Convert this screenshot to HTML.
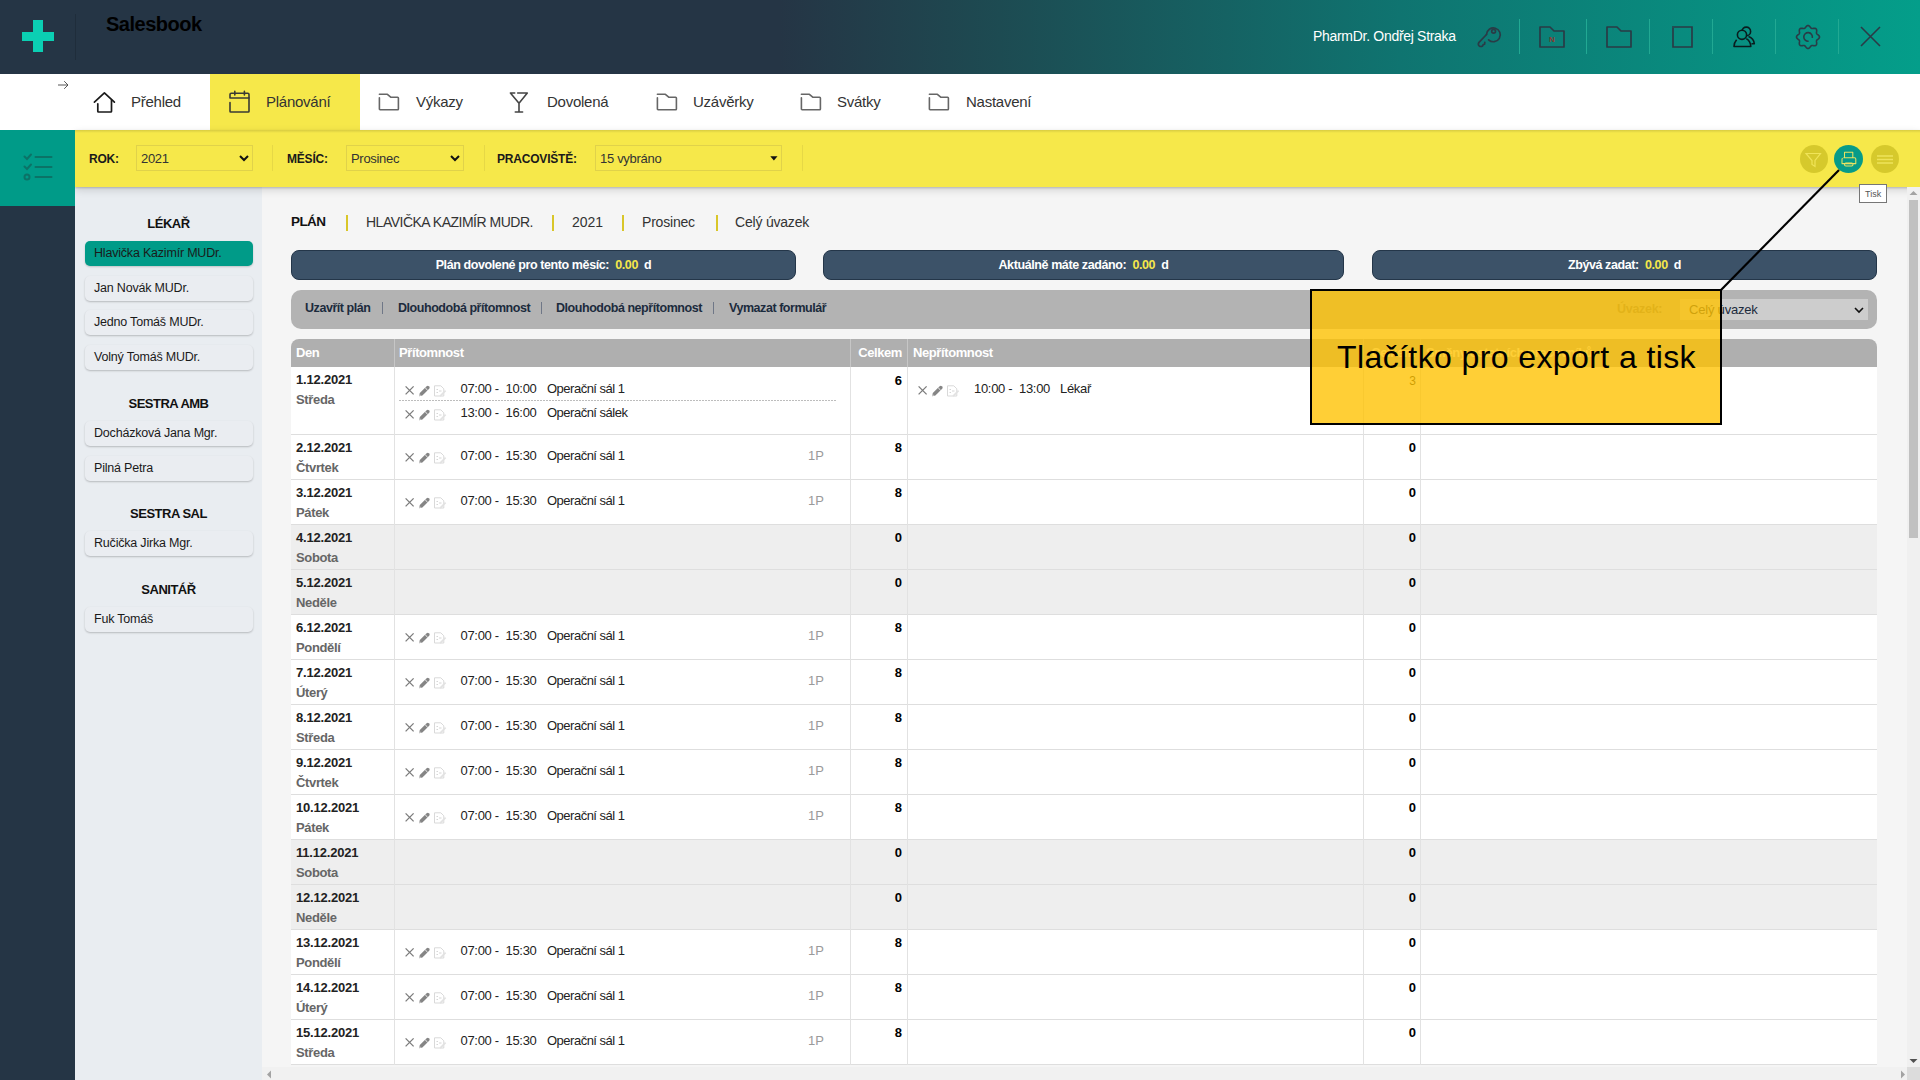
<!DOCTYPE html>
<html><head><meta charset="utf-8"><style>
*{margin:0;padding:0;box-sizing:border-box}
html,body{width:1920px;height:1080px;overflow:hidden;background:#f5f5f5;font-family:"Liberation Sans",sans-serif;color:#222}
.a{position:absolute}
.t{position:absolute;white-space:nowrap;line-height:0;height:0}
svg{position:absolute;overflow:visible}
</style></head><body>
<div class="a" style="left:0;top:0;width:1920px;height:74px;background:linear-gradient(90deg,#253545 0px,#253545 780px,#1d4b52 1000px,#0f7470 1400px,#049e8a 1920px)"></div>
<div class="a" style="left:33px;top:20px;width:10px;height:32px;background:#0bcfb3"></div>
<div class="a" style="left:22px;top:32px;width:32px;height:9px;background:#0bcfb3"></div>
<div class="a" style="left:75px;top:14px;width:1px;height:46px;background:#1f2d3b"></div>
<div class="t" style="left:106px;top:24.07px;font-size:20px;font-weight:bold;color:#000;letter-spacing:-0.5px;">Salesbook</div>
<div class="t" style="left:1313px;top:36.15px;font-size:14px;font-weight:normal;color:#fff;letter-spacing:-0.3px;">PharmDr. Ondřej Straka</div>
<div class="a" style="left:1519px;top:19px;width:1px;height:35px;background:#22a993"></div>
<div class="a" style="left:1586px;top:19px;width:1px;height:35px;background:#22a993"></div>
<div class="a" style="left:1649px;top:19px;width:1px;height:35px;background:#22a993"></div>
<div class="a" style="left:1712px;top:19px;width:1px;height:35px;background:#22a993"></div>
<div class="a" style="left:1775px;top:19px;width:1px;height:35px;background:#22a993"></div>
<div class="a" style="left:1838px;top:19px;width:1px;height:35px;background:#22a993"></div>
<svg style="left:1472px;top:20px" width="34" height="32" viewBox="0 0 34 32"><g fill="none" stroke="#2a3b46" stroke-width="1.7" stroke-linecap="round" stroke-linejoin="round"><path d="M14.5 14.5 A6.9 6.9 0 1 1 16.6 19.8"/><path d="M14.5 14.5 L7 22.3 Q5.6 24.5 7.2 26 Q8.8 27 10.6 26 L11.2 24.6 L12.6 24.2 L12.8 22.3"/><circle cx="21.6" cy="11.3" r="1.9"/></g></svg>
<svg style="left:1539px;top:26px" width="26" height="22" viewBox="0 0 26 22"><path d="M1 1 H11 L15 5 H25 V21 H1 Z" fill="none" stroke="#2a3b46" stroke-width="1.7" stroke-linejoin="round"/><text x="10" y="16" font-size="8" font-weight="bold" fill="#8a3a30" font-family="Liberation Sans">N</text></svg>
<svg style="left:1606px;top:26px" width="26" height="22" viewBox="0 0 26 22"><path d="M1 1 H11 L15 5 H25 V21 H1 Z" fill="none" stroke="#2a3b46" stroke-width="1.7" stroke-linejoin="round"/></svg>
<svg style="left:1672px;top:26px" width="21" height="22" viewBox="0 0 21 22"><path d="M0 1 H20 V21 H1 V2" fill="none" stroke="#2a3b46" stroke-width="1.7"/></svg>
<svg style="left:1733px;top:26px" width="23" height="22" viewBox="0 0 23 22"><g fill="none" stroke="#0a1c1e" stroke-width="1.6" stroke-linejoin="round"><circle cx="13.3" cy="5.4" r="4.3"/><path d="M15.5 10.5 Q20.8 12.3 21.3 17.8 L18.5 17.8"/><path d="M3.6 13.8 Q1.2 16.5 1 20.5 L17.8 20.5 Q17.6 15.2 13.3 12.6"/><circle cx="9" cy="8.8" r="4.6" fill="#07907f"/></g></svg>
<svg style="left:1796px;top:25px" width="24" height="24" viewBox="0 0 24 24"><g fill="none" stroke="#2a3b46" stroke-width="1.6" stroke-linejoin="round"><path d="M12.00 0.50 L12.60 0.61 L13.16 0.92 L13.68 1.39 L14.14 1.94 L14.55 2.49 L14.94 2.96 L15.34 3.30 L15.79 3.48 L16.32 3.53 L16.92 3.47 L17.60 3.37 L18.31 3.31 L19.01 3.35 L19.63 3.52 L20.13 3.87 L20.48 4.37 L20.65 4.99 L20.69 5.69 L20.63 6.40 L20.53 7.07 L20.47 7.68 L20.52 8.21 L20.70 8.66 L21.04 9.06 L21.51 9.45 L22.06 9.86 L22.61 10.32 L23.08 10.84 L23.39 11.40 L23.50 12.00 L23.39 12.60 L23.08 13.16 L22.61 13.68 L22.06 14.14 L21.51 14.55 L21.04 14.94 L20.70 15.34 L20.52 15.79 L20.47 16.32 L20.53 16.92 L20.63 17.60 L20.69 18.31 L20.65 19.01 L20.48 19.63 L20.13 20.13 L19.63 20.48 L19.01 20.65 L18.31 20.69 L17.60 20.63 L16.92 20.53 L16.32 20.47 L15.79 20.52 L15.34 20.70 L14.94 21.04 L14.55 21.51 L14.14 22.06 L13.68 22.61 L13.16 23.08 L12.60 23.39 L12.00 23.50 L11.40 23.39 L10.84 23.08 L10.32 22.61 L9.86 22.06 L9.45 21.51 L9.06 21.04 L8.66 20.70 L8.21 20.52 L7.68 20.47 L7.07 20.53 L6.40 20.63 L5.69 20.69 L4.99 20.65 L4.37 20.48 L3.87 20.13 L3.52 19.63 L3.35 19.01 L3.31 18.31 L3.37 17.60 L3.47 16.93 L3.53 16.32 L3.48 15.79 L3.30 15.34 L2.96 14.94 L2.49 14.55 L1.94 14.14 L1.39 13.68 L0.92 13.16 L0.61 12.60 L0.50 12.00 L0.61 11.40 L0.92 10.84 L1.39 10.32 L1.94 9.86 L2.49 9.45 L2.96 9.06 L3.30 8.66 L3.48 8.21 L3.53 7.68 L3.47 7.07 L3.37 6.40 L3.31 5.69 L3.35 4.99 L3.52 4.37 L3.87 3.87 L4.37 3.52 L4.99 3.35 L5.69 3.31 L6.40 3.37 L7.07 3.47 L7.68 3.53 L8.21 3.48 L8.66 3.30 L9.06 2.96 L9.45 2.49 L9.86 1.94 L10.32 1.39 L10.84 0.92 L11.40 0.61 L12.00 0.50 Z"/><path d="M16.3 12.8 A4.3 4.3 0 1 0 12.6 16.2"/></g></svg>
<svg style="left:1860px;top:26px" width="21" height="21" viewBox="0 0 21 21"><g stroke="#2a3b46" stroke-width="1.6"><path d="M1 1 L20 20 M20 1 L1 20"/></g></svg>
<div class="a" style="left:0;top:74px;width:1920px;height:56px;background:#fff"></div>
<div class="a" style="left:210px;top:74px;width:150px;height:56px;background:#f6e84a"></div>
<svg style="left:58px;top:80px" width="11" height="10" viewBox="0 0 11 10"><g fill="none" stroke="#444" stroke-width="0.9"><path d="M0 5 H10 M6.2 1.2 L10 5 L6.2 8.8"/></g></svg>
<svg style="left:93px;top:91px" width="23" height="22" viewBox="0 0 23 22"><g fill="none" stroke="#1a1a1a" stroke-width="1.7" stroke-linecap="round" stroke-linejoin="round"><path d="M1.4 11.1 L11.4 1.8 L21.4 11.1"/><path d="M4.8 12.8 V20.3 Q4.8 21 5.5 21 H17.8 Q18.5 21 18.5 20.3 V9.2"/></g></svg>
<svg style="left:229px;top:91px" width="22" height="23" viewBox="0 0 22 23"><g fill="none" stroke="#3a3a34" stroke-width="1.6" stroke-linecap="round" stroke-linejoin="round"><path d="M1 7 V3.5 Q1 2.3 2.2 2.3 H18.8 Q20 2.3 20 3.5 V7 H1"/><path d="M20 7 V20.3 Q20 21 19.3 21 H1.7 Q1 21 1 20.3 V11.5"/><path d="M5.8 0.4 V4 M15.4 0.4 V4"/></g></svg>
<svg style="left:378px;top:93px" width="23" height="18" viewBox="0 0 23 18"><path d="M1.4 1.3 H9.4 L13 4.3 H19.6 Q20.4 4.3 20.4 5.1 V16 Q20.4 16.7 19.7 16.7 H2.1 Q1.4 16.7 1.4 16 V4.8" fill="none" stroke="#666" stroke-width="1.6" stroke-linecap="round" stroke-linejoin="round"/></svg>
<svg style="left:509px;top:91px" width="20" height="23" viewBox="0 0 20 23"><g fill="none" stroke="#444" stroke-width="1.6" stroke-linecap="round" stroke-linejoin="round"><path d="M1.4 2 H5.7 M8.7 2 H18.3 L10 12.2 L1.4 2 M10 12.2 V21 M6.3 21 H13.6"/></g></svg>
<svg style="left:656px;top:93px" width="23" height="18" viewBox="0 0 23 18"><path d="M1.4 1.3 H9.4 L13 4.3 H19.6 Q20.4 4.3 20.4 5.1 V16 Q20.4 16.7 19.7 16.7 H2.1 Q1.4 16.7 1.4 16 V4.8" fill="none" stroke="#666" stroke-width="1.6" stroke-linecap="round" stroke-linejoin="round"/></svg>
<svg style="left:800px;top:93px" width="23" height="18" viewBox="0 0 23 18"><path d="M1.4 1.3 H9.4 L13 4.3 H19.6 Q20.4 4.3 20.4 5.1 V16 Q20.4 16.7 19.7 16.7 H2.1 Q1.4 16.7 1.4 16 V4.8" fill="none" stroke="#666" stroke-width="1.6" stroke-linecap="round" stroke-linejoin="round"/></svg>
<svg style="left:928px;top:93px" width="23" height="18" viewBox="0 0 23 18"><path d="M1.4 1.3 H9.4 L13 4.3 H19.6 Q20.4 4.3 20.4 5.1 V16 Q20.4 16.7 19.7 16.7 H2.1 Q1.4 16.7 1.4 16 V4.8" fill="none" stroke="#666" stroke-width="1.6" stroke-linecap="round" stroke-linejoin="round"/></svg>
<div class="t" style="left:131px;top:101.80px;font-size:15px;font-weight:normal;color:#333;letter-spacing:-0.25px;">Přehled</div>
<div class="t" style="left:266px;top:101.80px;font-size:15px;font-weight:normal;color:#333;letter-spacing:-0.25px;">Plánování</div>
<div class="t" style="left:416px;top:101.80px;font-size:15px;font-weight:normal;color:#333;letter-spacing:-0.25px;">Výkazy</div>
<div class="t" style="left:547px;top:101.80px;font-size:15px;font-weight:normal;color:#333;letter-spacing:-0.25px;">Dovolená</div>
<div class="t" style="left:693px;top:101.80px;font-size:15px;font-weight:normal;color:#333;letter-spacing:-0.25px;">Uzávěrky</div>
<div class="t" style="left:837px;top:101.80px;font-size:15px;font-weight:normal;color:#333;letter-spacing:-0.25px;">Svátky</div>
<div class="t" style="left:966px;top:101.80px;font-size:15px;font-weight:normal;color:#333;letter-spacing:-0.25px;">Nastavení</div>
<div class="a" style="left:0;top:130px;width:75px;height:950px;background:#253545"></div>
<div class="a" style="left:75px;top:187px;width:187px;height:893px;background:#e9edf1"></div>
<div class="a" style="left:75px;top:130px;width:1845px;height:57px;background:#f6e84a;box-shadow:0 1px 2px rgba(0,0,0,.18),0 3px 8px rgba(0,0,0,.14)"></div>
<div class="a" style="left:0;top:130px;width:75px;height:76px;background:#009b88"></div>
<div class="a" style="left:75px;top:130px;width:1845px;height:3px;background:linear-gradient(rgba(0,0,0,.12),rgba(0,0,0,0))"></div>
<svg style="left:22px;top:152px" width="32" height="30" viewBox="0 0 32 30"><g fill="none" stroke="#0b7367" stroke-width="2" stroke-linecap="round"><path d="M2.5 4.5 L5 7 L9 2.5"/><path d="M2.5 14.5 L5 17 L9 12.5"/><circle cx="5" cy="25" r="2.5"/><path d="M13.5 5 H29.5 M13.5 15 H29.5 M13.5 25 H29.5"/></g></svg>
<div class="t" style="left:89px;top:158.84px;font-size:12px;font-weight:bold;color:#1a1a1a;letter-spacing:-0.2px;">ROK:</div>
<div class="a" style="left:136px;top:145px;width:117px;height:26px;border:1px solid #e0d24a"></div>
<div class="t" style="left:141px;top:158.50px;font-size:13px;font-weight:normal;color:#333;letter-spacing:-0.3px;">2021</div>
<svg style="left:239px;top:155px" width="10" height="7" viewBox="0 0 10 7"><path d="M1 1 L5 5 L9 1" fill="none" stroke="#111" stroke-width="2"/></svg>
<div class="t" style="left:287px;top:158.84px;font-size:12px;font-weight:bold;color:#1a1a1a;letter-spacing:-0.2px;">MĚSÍC:</div>
<div class="a" style="left:346px;top:145px;width:118px;height:26px;border:1px solid #e0d24a"></div>
<div class="t" style="left:351px;top:158.50px;font-size:13px;font-weight:normal;color:#333;letter-spacing:-0.3px;">Prosinec</div>
<svg style="left:450px;top:155px" width="10" height="7" viewBox="0 0 10 7"><path d="M1 1 L5 5 L9 1" fill="none" stroke="#111" stroke-width="2"/></svg>
<div class="t" style="left:497px;top:158.84px;font-size:12px;font-weight:bold;color:#1a1a1a;letter-spacing:-0.2px;">PRACOVIŠTĚ:</div>
<div class="a" style="left:595px;top:145px;width:187px;height:26px;border:1px solid #e0d24a"></div>
<div class="t" style="left:600px;top:158.50px;font-size:13px;font-weight:normal;color:#333;letter-spacing:-0.3px;">15 vybráno</div>
<svg style="left:770px;top:155.5px" width="8" height="5" viewBox="0 0 8 5"><path d="M0.3 0.2 H7.5 L3.9 4.4 Z" fill="#111"/></svg>
<div class="a" style="left:272px;top:145px;width:1px;height:26px;background:#e6d846"></div>
<div class="a" style="left:484px;top:145px;width:1px;height:26px;background:#e6d846"></div>
<div class="a" style="left:802px;top:145px;width:1px;height:26px;background:#e6d846"></div>
<div class="a" style="left:1800px;top:145px;width:28px;height:28px;border-radius:50%;background:#d6c92c"></div>
<svg style="left:1804px;top:152px" width="20" height="16" viewBox="0 0 20 16"><path d="M2 1.5 H16.5 L11 8.5 V14.5 L8 12.5 V8.5 Z" fill="none" stroke="#f0e458" stroke-width="1.2"/></svg>
<div class="a" style="left:1834px;top:145px;width:29px;height:28px;border-radius:50%;background:#079b88"></div>
<svg style="left:1840px;top:151px" width="18" height="16" viewBox="0 0 18 16"><g fill="none" stroke="#e9e262" stroke-width="1.05" stroke-linejoin="round"><path d="M4.5 7 V1.3 H12.8 V7"/><path d="M3.4 6.8 H14.6 Q15.8 6.8 15.8 8 V12.6 H2 V8.4 Q2 7.6 2.6 7"/><rect x="4.5" y="12" width="8.5" height="3" rx="1.4"/></g></svg>
<div class="a" style="left:1871px;top:145px;width:28px;height:28px;border-radius:50%;background:#d6c92c"></div>
<svg style="left:1877px;top:155px" width="16" height="10" viewBox="0 0 16 10"><g stroke="#eee35a" stroke-width="1.4"><path d="M0 1 H16 M0 4.5 H16 M0 8 H16"/></g></svg>
<div class="t" style="left:75px;width:187px;text-align:center;top:223.50px;font-size:13px;font-weight:bold;color:#111;letter-spacing:-0.5px">LÉKAŘ</div>
<div class="a" style="left:85px;top:241px;width:168px;height:25px;border-radius:5px;background:#009b88;box-shadow:0 1px 2px rgba(0,0,0,.18)"></div>
<div class="t" style="left:94px;top:253.47px;font-size:12.5px;font-weight:normal;color:#1a1a1a;letter-spacing:-0.2px;">Hlavička Kazimír MUDr.</div>
<div class="a" style="left:85px;top:276px;width:168px;height:25px;border-radius:5px;background:#eaedf1;box-shadow:0 1px 2px rgba(0,0,0,.22)"></div>
<div class="t" style="left:94px;top:288.47px;font-size:12.5px;font-weight:normal;color:#1a1a1a;letter-spacing:-0.2px;">Jan Novák MUDr.</div>
<div class="a" style="left:85px;top:310px;width:168px;height:25px;border-radius:5px;background:#eaedf1;box-shadow:0 1px 2px rgba(0,0,0,.22)"></div>
<div class="t" style="left:94px;top:322.47px;font-size:12.5px;font-weight:normal;color:#1a1a1a;letter-spacing:-0.2px;">Jedno Tomáš MUDr.</div>
<div class="a" style="left:85px;top:345px;width:168px;height:25px;border-radius:5px;background:#eaedf1;box-shadow:0 1px 2px rgba(0,0,0,.22)"></div>
<div class="t" style="left:94px;top:357.47px;font-size:12.5px;font-weight:normal;color:#1a1a1a;letter-spacing:-0.2px;">Volný Tomáš MUDr.</div>
<div class="t" style="left:75px;width:187px;text-align:center;top:403.50px;font-size:13px;font-weight:bold;color:#111;letter-spacing:-0.5px">SESTRA AMB</div>
<div class="a" style="left:85px;top:421px;width:168px;height:25px;border-radius:5px;background:#eaedf1;box-shadow:0 1px 2px rgba(0,0,0,.22)"></div>
<div class="t" style="left:94px;top:433.47px;font-size:12.5px;font-weight:normal;color:#1a1a1a;letter-spacing:-0.2px;">Docházková Jana Mgr.</div>
<div class="a" style="left:85px;top:456px;width:168px;height:25px;border-radius:5px;background:#eaedf1;box-shadow:0 1px 2px rgba(0,0,0,.22)"></div>
<div class="t" style="left:94px;top:468.47px;font-size:12.5px;font-weight:normal;color:#1a1a1a;letter-spacing:-0.2px;">Pilná Petra</div>
<div class="t" style="left:75px;width:187px;text-align:center;top:513.50px;font-size:13px;font-weight:bold;color:#111;letter-spacing:-0.5px">SESTRA SAL</div>
<div class="a" style="left:85px;top:531px;width:168px;height:25px;border-radius:5px;background:#eaedf1;box-shadow:0 1px 2px rgba(0,0,0,.22)"></div>
<div class="t" style="left:94px;top:543.47px;font-size:12.5px;font-weight:normal;color:#1a1a1a;letter-spacing:-0.2px;">Ručička Jirka Mgr.</div>
<div class="t" style="left:75px;width:187px;text-align:center;top:589.50px;font-size:13px;font-weight:bold;color:#111;letter-spacing:-0.5px">SANITÁŘ</div>
<div class="a" style="left:85px;top:607px;width:168px;height:25px;border-radius:5px;background:#eaedf1;box-shadow:0 1px 2px rgba(0,0,0,.22)"></div>
<div class="t" style="left:94px;top:619.47px;font-size:12.5px;font-weight:normal;color:#1a1a1a;letter-spacing:-0.2px;">Fuk Tomáš</div>
<div class="t" style="left:291px;top:222.32px;font-size:13.5px;font-weight:bold;color:#111;letter-spacing:-0.6px;">PLÁN</div>
<div class="a" style="left:346px;top:215px;width:2px;height:16px;background:#d9c629"></div>
<div class="a" style="left:552px;top:215px;width:2px;height:16px;background:#d9c629"></div>
<div class="a" style="left:622px;top:215px;width:2px;height:16px;background:#d9c629"></div>
<div class="a" style="left:716px;top:215px;width:2px;height:16px;background:#d9c629"></div>
<div class="t" style="left:366px;top:222.15px;font-size:14px;font-weight:normal;color:#333;letter-spacing:-0.5px;">HLAVIČKA KAZIMÍR MUDR.</div>
<div class="t" style="left:572px;top:222.15px;font-size:14px;font-weight:normal;color:#333;">2021</div>
<div class="t" style="left:642px;top:222.15px;font-size:14px;font-weight:normal;color:#333;letter-spacing:-0.2px;">Prosinec</div>
<div class="t" style="left:735px;top:222.15px;font-size:14px;font-weight:normal;color:#333;letter-spacing:-0.2px;">Celý úvazek</div>
<div class="a" style="left:291px;top:250px;width:505px;height:30px;border-radius:8px;background:#3c5268;border:1px solid #243649"></div>
<div class="t" style="left:291px;width:505px;text-align:center;top:264.67px;font-size:12.5px;font-weight:bold;color:#fff;letter-spacing:-0.4px">Plán dovolené pro tento měsíc:&nbsp; <span style="color:#f6e84a">0.00</span>&nbsp; d</div>
<div class="a" style="left:823px;top:250px;width:521px;height:30px;border-radius:8px;background:#3c5268;border:1px solid #243649"></div>
<div class="t" style="left:823px;width:521px;text-align:center;top:264.67px;font-size:12.5px;font-weight:bold;color:#fff;letter-spacing:-0.4px">Aktuálně máte zadáno:&nbsp; <span style="color:#f6e84a">0.00</span>&nbsp; d</div>
<div class="a" style="left:1372px;top:250px;width:505px;height:30px;border-radius:8px;background:#3c5268;border:1px solid #243649"></div>
<div class="t" style="left:1372px;width:505px;text-align:center;top:264.67px;font-size:12.5px;font-weight:bold;color:#fff;letter-spacing:-0.4px">Zbývá zadat:&nbsp; <span style="color:#f6e84a">0.00</span>&nbsp; d</div>
<div class="a" style="left:291px;top:290px;width:1586px;height:39px;border-radius:10px;background:#b3b3b3"></div>
<div class="t" style="left:305px;top:308.17px;font-size:12.5px;font-weight:bold;color:#1c2b3d;letter-spacing:-0.45px;">Uzavřít plán</div>
<div class="t" style="left:398px;top:308.17px;font-size:12.5px;font-weight:bold;color:#1c2b3d;letter-spacing:-0.45px;">Dlouhodobá přítomnost</div>
<div class="t" style="left:556px;top:308.17px;font-size:12.5px;font-weight:bold;color:#1c2b3d;letter-spacing:-0.45px;">Dlouhodobá nepřítomnost</div>
<div class="t" style="left:729px;top:308.17px;font-size:12.5px;font-weight:bold;color:#1c2b3d;letter-spacing:-0.45px;">Vymazat formulář</div>
<div class="a" style="left:382px;top:302px;width:1px;height:12px;background:#6f7787"></div>
<div class="a" style="left:541px;top:302px;width:1px;height:12px;background:#6f7787"></div>
<div class="a" style="left:713px;top:302px;width:1px;height:12px;background:#6f7787"></div>
<div class="t" style="left:1617px;top:308.67px;font-size:12.5px;font-weight:bold;color:#777;letter-spacing:-0.3px;">Úvazek:</div>
<div class="a" style="left:1680px;top:299px;width:188px;height:21px;background:#cdcdcd"></div>
<div class="t" style="left:1689px;top:309.50px;font-size:13px;font-weight:normal;color:#1c2b3d;letter-spacing:-0.2px;">Celý úvazek</div>
<svg style="left:1854px;top:307px" width="10" height="7" viewBox="0 0 10 7"><path d="M1 1 L5 5 L9 1" fill="none" stroke="#111" stroke-width="1.6"/></svg>
<div class="a" style="left:291px;top:339px;width:1586px;height:28px;border-radius:8px 8px 0 0;background:#afafaf"></div>
<div class="a" style="left:394px;top:339px;width:1px;height:28px;background:#c6c6c6"></div>
<div class="a" style="left:850px;top:339px;width:1px;height:28px;background:#c6c6c6"></div>
<div class="a" style="left:907px;top:339px;width:1px;height:28px;background:#c6c6c6"></div>
<div class="a" style="left:1363px;top:339px;width:1px;height:28px;background:#c6c6c6"></div>
<div class="a" style="left:1420px;top:339px;width:1px;height:28px;background:#c6c6c6"></div>
<div class="t" style="left:296px;top:352.50px;font-size:13px;font-weight:bold;color:#fff;letter-spacing:-0.4px;">Den</div>
<div class="t" style="left:399px;top:352.50px;font-size:13px;font-weight:bold;color:#fff;letter-spacing:-0.4px;">Přítomnost</div>
<div class="t" style="right:1018px;top:352.50px;font-size:13px;font-weight:bold;color:#fff;letter-spacing:-0.4px;">Celkem</div>
<div class="t" style="left:913px;top:352.50px;font-size:13px;font-weight:bold;color:#fff;letter-spacing:-0.4px;">Nepřítomnost</div>
<div class="t" style="right:505px;top:352.50px;font-size:13px;font-weight:bold;color:#fff;letter-spacing:-0.4px;">Celkem</div>
<div class="t" style="left:1426px;top:352.50px;font-size:13px;font-weight:bold;color:#fff;letter-spacing:-0.4px;">Směny ostatních pracovníků</div>
<div class="a" style="left:291px;top:367px;width:1586px;height:68px;background:#ffffff;border-bottom:1px solid #dedede"></div>
<div class="a" style="left:394px;top:367px;width:1px;height:68px;background:#e2e2e2"></div>
<div class="a" style="left:850px;top:367px;width:1px;height:68px;background:#e2e2e2"></div>
<div class="a" style="left:907px;top:367px;width:1px;height:68px;background:#e2e2e2"></div>
<div class="a" style="left:1363px;top:367px;width:1px;height:68px;background:#e2e2e2"></div>
<div class="a" style="left:1420px;top:367px;width:1px;height:68px;background:#e2e2e2"></div>
<div class="t" style="left:296px;top:380.20px;font-size:13px;font-weight:bold;color:#222;letter-spacing:-0.2px;">1.12.2021</div>
<div class="t" style="left:296px;top:400.00px;font-size:13px;font-weight:bold;color:#666;letter-spacing:-0.35px;">Středa</div>
<svg style="left:404px;top:384.5px" width="44" height="13" viewBox="0 0 44 13"><path d="M1.6 1.4 L9.6 9.4 M9.6 1.4 L1.6 9.4" stroke="#7b7b7b" stroke-width="1.3"/><path d="M15 11.2 L15.8 8 L22.6 1.2 Q23.8 0.2 24.9 1.2 L25.2 1.5 Q26.2 2.6 25.2 3.8 L18.4 10.6 Z" fill="#858585"/><path d="M21.2 2.8 L23.6 5.2" stroke="#fff" stroke-width="0.9"/><path d="M15 11.2 L15.6 9 L17.2 10.6 Z" fill="#d0d0d0"/><path d="M30.5 0.8 H36.8 L39.8 3.8 V11 H30.5 Z" fill="none" stroke="#d9d9d9" stroke-width="1"/><path d="M32.5 4.5 H34 M32.5 7.5 H34 M35 6 H37.5" stroke="#d6d6d6" stroke-width="1"/><path d="M35.5 10.5 L41 5 L42.2 6.2 L36.7 11.7 Z" fill="#e2e2e2"/></svg>
<div class="t" style="left:460.5px;top:388.50px;font-size:13px;font-weight:normal;color:#222;letter-spacing:-0.3px;">07:00 -&nbsp; 10:00</div>
<div class="t" style="left:547px;top:388.50px;font-size:13px;font-weight:normal;color:#222;letter-spacing:-0.5px;">Operační sál 1</div>
<div class="a" style="left:399px;top:400px;width:437px;height:1px;background:repeating-linear-gradient(90deg,#bdbdbd 0 2px,transparent 2px 3px)"></div>
<svg style="left:404px;top:408.5px" width="44" height="13" viewBox="0 0 44 13"><path d="M1.6 1.4 L9.6 9.4 M9.6 1.4 L1.6 9.4" stroke="#7b7b7b" stroke-width="1.3"/><path d="M15 11.2 L15.8 8 L22.6 1.2 Q23.8 0.2 24.9 1.2 L25.2 1.5 Q26.2 2.6 25.2 3.8 L18.4 10.6 Z" fill="#858585"/><path d="M21.2 2.8 L23.6 5.2" stroke="#fff" stroke-width="0.9"/><path d="M15 11.2 L15.6 9 L17.2 10.6 Z" fill="#d0d0d0"/><path d="M30.5 0.8 H36.8 L39.8 3.8 V11 H30.5 Z" fill="none" stroke="#d9d9d9" stroke-width="1"/><path d="M32.5 4.5 H34 M32.5 7.5 H34 M35 6 H37.5" stroke="#d6d6d6" stroke-width="1"/><path d="M35.5 10.5 L41 5 L42.2 6.2 L36.7 11.7 Z" fill="#e2e2e2"/></svg>
<div class="t" style="left:460.5px;top:412.50px;font-size:13px;font-weight:normal;color:#222;letter-spacing:-0.3px;">13:00 -&nbsp; 16:00</div>
<div class="t" style="left:547px;top:412.50px;font-size:13px;font-weight:normal;color:#222;letter-spacing:-0.5px;">Operační sálek</div>
<div class="t" style="right:1018px;top:380.70px;font-size:13px;font-weight:bold;color:#000;">6</div>
<svg style="left:917px;top:384.5px" width="44" height="13" viewBox="0 0 44 13"><path d="M1.6 1.4 L9.6 9.4 M9.6 1.4 L1.6 9.4" stroke="#7b7b7b" stroke-width="1.3"/><path d="M15 11.2 L15.8 8 L22.6 1.2 Q23.8 0.2 24.9 1.2 L25.2 1.5 Q26.2 2.6 25.2 3.8 L18.4 10.6 Z" fill="#858585"/><path d="M21.2 2.8 L23.6 5.2" stroke="#fff" stroke-width="0.9"/><path d="M15 11.2 L15.6 9 L17.2 10.6 Z" fill="#d0d0d0"/><path d="M30.5 0.8 H36.8 L39.8 3.8 V11 H30.5 Z" fill="none" stroke="#d9d9d9" stroke-width="1"/><path d="M32.5 4.5 H34 M32.5 7.5 H34 M35 6 H37.5" stroke="#d6d6d6" stroke-width="1"/><path d="M35.5 10.5 L41 5 L42.2 6.2 L36.7 11.7 Z" fill="#e2e2e2"/></svg>
<div class="t" style="left:974px;top:388.50px;font-size:13px;font-weight:normal;color:#222;letter-spacing:-0.3px;">10:00 -&nbsp; 13:00</div>
<div class="t" style="left:1060px;top:388.50px;font-size:13px;font-weight:normal;color:#222;letter-spacing:-0.3px;">Lékař</div>
<div class="t" style="right:504px;top:380.84px;font-size:12px;font-weight:normal;color:#111;">3</div>
<div class="a" style="left:291px;top:435px;width:1586px;height:45px;background:#ffffff;border-bottom:1px solid #dedede"></div>
<div class="a" style="left:394px;top:435px;width:1px;height:45px;background:#e2e2e2"></div>
<div class="a" style="left:850px;top:435px;width:1px;height:45px;background:#e2e2e2"></div>
<div class="a" style="left:907px;top:435px;width:1px;height:45px;background:#e2e2e2"></div>
<div class="a" style="left:1363px;top:435px;width:1px;height:45px;background:#e2e2e2"></div>
<div class="a" style="left:1420px;top:435px;width:1px;height:45px;background:#e2e2e2"></div>
<div class="t" style="left:296px;top:448.00px;font-size:13px;font-weight:bold;color:#222;letter-spacing:-0.2px;">2.12.2021</div>
<div class="t" style="left:296px;top:467.80px;font-size:13px;font-weight:bold;color:#666;letter-spacing:-0.35px;">Čtvrtek</div>
<svg style="left:404px;top:452.0px" width="44" height="13" viewBox="0 0 44 13"><path d="M1.6 1.4 L9.6 9.4 M9.6 1.4 L1.6 9.4" stroke="#7b7b7b" stroke-width="1.3"/><path d="M15 11.2 L15.8 8 L22.6 1.2 Q23.8 0.2 24.9 1.2 L25.2 1.5 Q26.2 2.6 25.2 3.8 L18.4 10.6 Z" fill="#858585"/><path d="M21.2 2.8 L23.6 5.2" stroke="#fff" stroke-width="0.9"/><path d="M15 11.2 L15.6 9 L17.2 10.6 Z" fill="#d0d0d0"/><path d="M30.5 0.8 H36.8 L39.8 3.8 V11 H30.5 Z" fill="none" stroke="#d9d9d9" stroke-width="1"/><path d="M32.5 4.5 H34 M32.5 7.5 H34 M35 6 H37.5" stroke="#d6d6d6" stroke-width="1"/><path d="M35.5 10.5 L41 5 L42.2 6.2 L36.7 11.7 Z" fill="#e2e2e2"/></svg>
<div class="t" style="left:460.5px;top:455.50px;font-size:13px;font-weight:normal;color:#222;letter-spacing:-0.3px;">07:00 -&nbsp; 15:30</div>
<div class="t" style="left:547px;top:455.50px;font-size:13px;font-weight:normal;color:#222;letter-spacing:-0.5px;">Operační sál 1</div>
<div class="t" style="right:1096px;top:455.50px;font-size:13px;font-weight:normal;color:#9a9a9a;">1P</div>
<div class="t" style="right:1018px;top:447.50px;font-size:13px;font-weight:bold;color:#000;">8</div>
<div class="t" style="right:504px;top:447.50px;font-size:13px;font-weight:bold;color:#000;">0</div>
<div class="a" style="left:291px;top:480px;width:1586px;height:45px;background:#ffffff;border-bottom:1px solid #dedede"></div>
<div class="a" style="left:394px;top:480px;width:1px;height:45px;background:#e2e2e2"></div>
<div class="a" style="left:850px;top:480px;width:1px;height:45px;background:#e2e2e2"></div>
<div class="a" style="left:907px;top:480px;width:1px;height:45px;background:#e2e2e2"></div>
<div class="a" style="left:1363px;top:480px;width:1px;height:45px;background:#e2e2e2"></div>
<div class="a" style="left:1420px;top:480px;width:1px;height:45px;background:#e2e2e2"></div>
<div class="t" style="left:296px;top:493.00px;font-size:13px;font-weight:bold;color:#222;letter-spacing:-0.2px;">3.12.2021</div>
<div class="t" style="left:296px;top:512.80px;font-size:13px;font-weight:bold;color:#666;letter-spacing:-0.35px;">Pátek</div>
<svg style="left:404px;top:497.0px" width="44" height="13" viewBox="0 0 44 13"><path d="M1.6 1.4 L9.6 9.4 M9.6 1.4 L1.6 9.4" stroke="#7b7b7b" stroke-width="1.3"/><path d="M15 11.2 L15.8 8 L22.6 1.2 Q23.8 0.2 24.9 1.2 L25.2 1.5 Q26.2 2.6 25.2 3.8 L18.4 10.6 Z" fill="#858585"/><path d="M21.2 2.8 L23.6 5.2" stroke="#fff" stroke-width="0.9"/><path d="M15 11.2 L15.6 9 L17.2 10.6 Z" fill="#d0d0d0"/><path d="M30.5 0.8 H36.8 L39.8 3.8 V11 H30.5 Z" fill="none" stroke="#d9d9d9" stroke-width="1"/><path d="M32.5 4.5 H34 M32.5 7.5 H34 M35 6 H37.5" stroke="#d6d6d6" stroke-width="1"/><path d="M35.5 10.5 L41 5 L42.2 6.2 L36.7 11.7 Z" fill="#e2e2e2"/></svg>
<div class="t" style="left:460.5px;top:500.50px;font-size:13px;font-weight:normal;color:#222;letter-spacing:-0.3px;">07:00 -&nbsp; 15:30</div>
<div class="t" style="left:547px;top:500.50px;font-size:13px;font-weight:normal;color:#222;letter-spacing:-0.5px;">Operační sál 1</div>
<div class="t" style="right:1096px;top:500.50px;font-size:13px;font-weight:normal;color:#9a9a9a;">1P</div>
<div class="t" style="right:1018px;top:492.50px;font-size:13px;font-weight:bold;color:#000;">8</div>
<div class="t" style="right:504px;top:492.50px;font-size:13px;font-weight:bold;color:#000;">0</div>
<div class="a" style="left:291px;top:525px;width:1586px;height:45px;background:#eeeeee;border-bottom:1px solid #dedede"></div>
<div class="a" style="left:394px;top:525px;width:1px;height:45px;background:#e2e2e2"></div>
<div class="a" style="left:850px;top:525px;width:1px;height:45px;background:#e2e2e2"></div>
<div class="a" style="left:907px;top:525px;width:1px;height:45px;background:#e2e2e2"></div>
<div class="a" style="left:1363px;top:525px;width:1px;height:45px;background:#e2e2e2"></div>
<div class="a" style="left:1420px;top:525px;width:1px;height:45px;background:#e2e2e2"></div>
<div class="t" style="left:296px;top:538.00px;font-size:13px;font-weight:bold;color:#222;letter-spacing:-0.2px;">4.12.2021</div>
<div class="t" style="left:296px;top:557.80px;font-size:13px;font-weight:bold;color:#666;letter-spacing:-0.35px;">Sobota</div>
<div class="t" style="right:1018px;top:537.50px;font-size:13px;font-weight:bold;color:#000;">0</div>
<div class="t" style="right:504px;top:537.50px;font-size:13px;font-weight:bold;color:#000;">0</div>
<div class="a" style="left:291px;top:570px;width:1586px;height:45px;background:#eeeeee;border-bottom:1px solid #dedede"></div>
<div class="a" style="left:394px;top:570px;width:1px;height:45px;background:#e2e2e2"></div>
<div class="a" style="left:850px;top:570px;width:1px;height:45px;background:#e2e2e2"></div>
<div class="a" style="left:907px;top:570px;width:1px;height:45px;background:#e2e2e2"></div>
<div class="a" style="left:1363px;top:570px;width:1px;height:45px;background:#e2e2e2"></div>
<div class="a" style="left:1420px;top:570px;width:1px;height:45px;background:#e2e2e2"></div>
<div class="t" style="left:296px;top:583.00px;font-size:13px;font-weight:bold;color:#222;letter-spacing:-0.2px;">5.12.2021</div>
<div class="t" style="left:296px;top:602.80px;font-size:13px;font-weight:bold;color:#666;letter-spacing:-0.35px;">Neděle</div>
<div class="t" style="right:1018px;top:582.50px;font-size:13px;font-weight:bold;color:#000;">0</div>
<div class="t" style="right:504px;top:582.50px;font-size:13px;font-weight:bold;color:#000;">0</div>
<div class="a" style="left:291px;top:615px;width:1586px;height:45px;background:#ffffff;border-bottom:1px solid #dedede"></div>
<div class="a" style="left:394px;top:615px;width:1px;height:45px;background:#e2e2e2"></div>
<div class="a" style="left:850px;top:615px;width:1px;height:45px;background:#e2e2e2"></div>
<div class="a" style="left:907px;top:615px;width:1px;height:45px;background:#e2e2e2"></div>
<div class="a" style="left:1363px;top:615px;width:1px;height:45px;background:#e2e2e2"></div>
<div class="a" style="left:1420px;top:615px;width:1px;height:45px;background:#e2e2e2"></div>
<div class="t" style="left:296px;top:628.00px;font-size:13px;font-weight:bold;color:#222;letter-spacing:-0.2px;">6.12.2021</div>
<div class="t" style="left:296px;top:647.80px;font-size:13px;font-weight:bold;color:#666;letter-spacing:-0.35px;">Pondělí</div>
<svg style="left:404px;top:632.0px" width="44" height="13" viewBox="0 0 44 13"><path d="M1.6 1.4 L9.6 9.4 M9.6 1.4 L1.6 9.4" stroke="#7b7b7b" stroke-width="1.3"/><path d="M15 11.2 L15.8 8 L22.6 1.2 Q23.8 0.2 24.9 1.2 L25.2 1.5 Q26.2 2.6 25.2 3.8 L18.4 10.6 Z" fill="#858585"/><path d="M21.2 2.8 L23.6 5.2" stroke="#fff" stroke-width="0.9"/><path d="M15 11.2 L15.6 9 L17.2 10.6 Z" fill="#d0d0d0"/><path d="M30.5 0.8 H36.8 L39.8 3.8 V11 H30.5 Z" fill="none" stroke="#d9d9d9" stroke-width="1"/><path d="M32.5 4.5 H34 M32.5 7.5 H34 M35 6 H37.5" stroke="#d6d6d6" stroke-width="1"/><path d="M35.5 10.5 L41 5 L42.2 6.2 L36.7 11.7 Z" fill="#e2e2e2"/></svg>
<div class="t" style="left:460.5px;top:635.50px;font-size:13px;font-weight:normal;color:#222;letter-spacing:-0.3px;">07:00 -&nbsp; 15:30</div>
<div class="t" style="left:547px;top:635.50px;font-size:13px;font-weight:normal;color:#222;letter-spacing:-0.5px;">Operační sál 1</div>
<div class="t" style="right:1096px;top:635.50px;font-size:13px;font-weight:normal;color:#9a9a9a;">1P</div>
<div class="t" style="right:1018px;top:627.50px;font-size:13px;font-weight:bold;color:#000;">8</div>
<div class="t" style="right:504px;top:627.50px;font-size:13px;font-weight:bold;color:#000;">0</div>
<div class="a" style="left:291px;top:660px;width:1586px;height:45px;background:#ffffff;border-bottom:1px solid #dedede"></div>
<div class="a" style="left:394px;top:660px;width:1px;height:45px;background:#e2e2e2"></div>
<div class="a" style="left:850px;top:660px;width:1px;height:45px;background:#e2e2e2"></div>
<div class="a" style="left:907px;top:660px;width:1px;height:45px;background:#e2e2e2"></div>
<div class="a" style="left:1363px;top:660px;width:1px;height:45px;background:#e2e2e2"></div>
<div class="a" style="left:1420px;top:660px;width:1px;height:45px;background:#e2e2e2"></div>
<div class="t" style="left:296px;top:673.00px;font-size:13px;font-weight:bold;color:#222;letter-spacing:-0.2px;">7.12.2021</div>
<div class="t" style="left:296px;top:692.80px;font-size:13px;font-weight:bold;color:#666;letter-spacing:-0.35px;">Úterý</div>
<svg style="left:404px;top:677.0px" width="44" height="13" viewBox="0 0 44 13"><path d="M1.6 1.4 L9.6 9.4 M9.6 1.4 L1.6 9.4" stroke="#7b7b7b" stroke-width="1.3"/><path d="M15 11.2 L15.8 8 L22.6 1.2 Q23.8 0.2 24.9 1.2 L25.2 1.5 Q26.2 2.6 25.2 3.8 L18.4 10.6 Z" fill="#858585"/><path d="M21.2 2.8 L23.6 5.2" stroke="#fff" stroke-width="0.9"/><path d="M15 11.2 L15.6 9 L17.2 10.6 Z" fill="#d0d0d0"/><path d="M30.5 0.8 H36.8 L39.8 3.8 V11 H30.5 Z" fill="none" stroke="#d9d9d9" stroke-width="1"/><path d="M32.5 4.5 H34 M32.5 7.5 H34 M35 6 H37.5" stroke="#d6d6d6" stroke-width="1"/><path d="M35.5 10.5 L41 5 L42.2 6.2 L36.7 11.7 Z" fill="#e2e2e2"/></svg>
<div class="t" style="left:460.5px;top:680.50px;font-size:13px;font-weight:normal;color:#222;letter-spacing:-0.3px;">07:00 -&nbsp; 15:30</div>
<div class="t" style="left:547px;top:680.50px;font-size:13px;font-weight:normal;color:#222;letter-spacing:-0.5px;">Operační sál 1</div>
<div class="t" style="right:1096px;top:680.50px;font-size:13px;font-weight:normal;color:#9a9a9a;">1P</div>
<div class="t" style="right:1018px;top:672.50px;font-size:13px;font-weight:bold;color:#000;">8</div>
<div class="t" style="right:504px;top:672.50px;font-size:13px;font-weight:bold;color:#000;">0</div>
<div class="a" style="left:291px;top:705px;width:1586px;height:45px;background:#ffffff;border-bottom:1px solid #dedede"></div>
<div class="a" style="left:394px;top:705px;width:1px;height:45px;background:#e2e2e2"></div>
<div class="a" style="left:850px;top:705px;width:1px;height:45px;background:#e2e2e2"></div>
<div class="a" style="left:907px;top:705px;width:1px;height:45px;background:#e2e2e2"></div>
<div class="a" style="left:1363px;top:705px;width:1px;height:45px;background:#e2e2e2"></div>
<div class="a" style="left:1420px;top:705px;width:1px;height:45px;background:#e2e2e2"></div>
<div class="t" style="left:296px;top:718.00px;font-size:13px;font-weight:bold;color:#222;letter-spacing:-0.2px;">8.12.2021</div>
<div class="t" style="left:296px;top:737.80px;font-size:13px;font-weight:bold;color:#666;letter-spacing:-0.35px;">Středa</div>
<svg style="left:404px;top:722.0px" width="44" height="13" viewBox="0 0 44 13"><path d="M1.6 1.4 L9.6 9.4 M9.6 1.4 L1.6 9.4" stroke="#7b7b7b" stroke-width="1.3"/><path d="M15 11.2 L15.8 8 L22.6 1.2 Q23.8 0.2 24.9 1.2 L25.2 1.5 Q26.2 2.6 25.2 3.8 L18.4 10.6 Z" fill="#858585"/><path d="M21.2 2.8 L23.6 5.2" stroke="#fff" stroke-width="0.9"/><path d="M15 11.2 L15.6 9 L17.2 10.6 Z" fill="#d0d0d0"/><path d="M30.5 0.8 H36.8 L39.8 3.8 V11 H30.5 Z" fill="none" stroke="#d9d9d9" stroke-width="1"/><path d="M32.5 4.5 H34 M32.5 7.5 H34 M35 6 H37.5" stroke="#d6d6d6" stroke-width="1"/><path d="M35.5 10.5 L41 5 L42.2 6.2 L36.7 11.7 Z" fill="#e2e2e2"/></svg>
<div class="t" style="left:460.5px;top:725.50px;font-size:13px;font-weight:normal;color:#222;letter-spacing:-0.3px;">07:00 -&nbsp; 15:30</div>
<div class="t" style="left:547px;top:725.50px;font-size:13px;font-weight:normal;color:#222;letter-spacing:-0.5px;">Operační sál 1</div>
<div class="t" style="right:1096px;top:725.50px;font-size:13px;font-weight:normal;color:#9a9a9a;">1P</div>
<div class="t" style="right:1018px;top:717.50px;font-size:13px;font-weight:bold;color:#000;">8</div>
<div class="t" style="right:504px;top:717.50px;font-size:13px;font-weight:bold;color:#000;">0</div>
<div class="a" style="left:291px;top:750px;width:1586px;height:45px;background:#ffffff;border-bottom:1px solid #dedede"></div>
<div class="a" style="left:394px;top:750px;width:1px;height:45px;background:#e2e2e2"></div>
<div class="a" style="left:850px;top:750px;width:1px;height:45px;background:#e2e2e2"></div>
<div class="a" style="left:907px;top:750px;width:1px;height:45px;background:#e2e2e2"></div>
<div class="a" style="left:1363px;top:750px;width:1px;height:45px;background:#e2e2e2"></div>
<div class="a" style="left:1420px;top:750px;width:1px;height:45px;background:#e2e2e2"></div>
<div class="t" style="left:296px;top:763.00px;font-size:13px;font-weight:bold;color:#222;letter-spacing:-0.2px;">9.12.2021</div>
<div class="t" style="left:296px;top:782.80px;font-size:13px;font-weight:bold;color:#666;letter-spacing:-0.35px;">Čtvrtek</div>
<svg style="left:404px;top:767.0px" width="44" height="13" viewBox="0 0 44 13"><path d="M1.6 1.4 L9.6 9.4 M9.6 1.4 L1.6 9.4" stroke="#7b7b7b" stroke-width="1.3"/><path d="M15 11.2 L15.8 8 L22.6 1.2 Q23.8 0.2 24.9 1.2 L25.2 1.5 Q26.2 2.6 25.2 3.8 L18.4 10.6 Z" fill="#858585"/><path d="M21.2 2.8 L23.6 5.2" stroke="#fff" stroke-width="0.9"/><path d="M15 11.2 L15.6 9 L17.2 10.6 Z" fill="#d0d0d0"/><path d="M30.5 0.8 H36.8 L39.8 3.8 V11 H30.5 Z" fill="none" stroke="#d9d9d9" stroke-width="1"/><path d="M32.5 4.5 H34 M32.5 7.5 H34 M35 6 H37.5" stroke="#d6d6d6" stroke-width="1"/><path d="M35.5 10.5 L41 5 L42.2 6.2 L36.7 11.7 Z" fill="#e2e2e2"/></svg>
<div class="t" style="left:460.5px;top:770.50px;font-size:13px;font-weight:normal;color:#222;letter-spacing:-0.3px;">07:00 -&nbsp; 15:30</div>
<div class="t" style="left:547px;top:770.50px;font-size:13px;font-weight:normal;color:#222;letter-spacing:-0.5px;">Operační sál 1</div>
<div class="t" style="right:1096px;top:770.50px;font-size:13px;font-weight:normal;color:#9a9a9a;">1P</div>
<div class="t" style="right:1018px;top:762.50px;font-size:13px;font-weight:bold;color:#000;">8</div>
<div class="t" style="right:504px;top:762.50px;font-size:13px;font-weight:bold;color:#000;">0</div>
<div class="a" style="left:291px;top:795px;width:1586px;height:45px;background:#ffffff;border-bottom:1px solid #dedede"></div>
<div class="a" style="left:394px;top:795px;width:1px;height:45px;background:#e2e2e2"></div>
<div class="a" style="left:850px;top:795px;width:1px;height:45px;background:#e2e2e2"></div>
<div class="a" style="left:907px;top:795px;width:1px;height:45px;background:#e2e2e2"></div>
<div class="a" style="left:1363px;top:795px;width:1px;height:45px;background:#e2e2e2"></div>
<div class="a" style="left:1420px;top:795px;width:1px;height:45px;background:#e2e2e2"></div>
<div class="t" style="left:296px;top:808.00px;font-size:13px;font-weight:bold;color:#222;letter-spacing:-0.2px;">10.12.2021</div>
<div class="t" style="left:296px;top:827.80px;font-size:13px;font-weight:bold;color:#666;letter-spacing:-0.35px;">Pátek</div>
<svg style="left:404px;top:812.0px" width="44" height="13" viewBox="0 0 44 13"><path d="M1.6 1.4 L9.6 9.4 M9.6 1.4 L1.6 9.4" stroke="#7b7b7b" stroke-width="1.3"/><path d="M15 11.2 L15.8 8 L22.6 1.2 Q23.8 0.2 24.9 1.2 L25.2 1.5 Q26.2 2.6 25.2 3.8 L18.4 10.6 Z" fill="#858585"/><path d="M21.2 2.8 L23.6 5.2" stroke="#fff" stroke-width="0.9"/><path d="M15 11.2 L15.6 9 L17.2 10.6 Z" fill="#d0d0d0"/><path d="M30.5 0.8 H36.8 L39.8 3.8 V11 H30.5 Z" fill="none" stroke="#d9d9d9" stroke-width="1"/><path d="M32.5 4.5 H34 M32.5 7.5 H34 M35 6 H37.5" stroke="#d6d6d6" stroke-width="1"/><path d="M35.5 10.5 L41 5 L42.2 6.2 L36.7 11.7 Z" fill="#e2e2e2"/></svg>
<div class="t" style="left:460.5px;top:815.50px;font-size:13px;font-weight:normal;color:#222;letter-spacing:-0.3px;">07:00 -&nbsp; 15:30</div>
<div class="t" style="left:547px;top:815.50px;font-size:13px;font-weight:normal;color:#222;letter-spacing:-0.5px;">Operační sál 1</div>
<div class="t" style="right:1096px;top:815.50px;font-size:13px;font-weight:normal;color:#9a9a9a;">1P</div>
<div class="t" style="right:1018px;top:807.50px;font-size:13px;font-weight:bold;color:#000;">8</div>
<div class="t" style="right:504px;top:807.50px;font-size:13px;font-weight:bold;color:#000;">0</div>
<div class="a" style="left:291px;top:840px;width:1586px;height:45px;background:#eeeeee;border-bottom:1px solid #dedede"></div>
<div class="a" style="left:394px;top:840px;width:1px;height:45px;background:#e2e2e2"></div>
<div class="a" style="left:850px;top:840px;width:1px;height:45px;background:#e2e2e2"></div>
<div class="a" style="left:907px;top:840px;width:1px;height:45px;background:#e2e2e2"></div>
<div class="a" style="left:1363px;top:840px;width:1px;height:45px;background:#e2e2e2"></div>
<div class="a" style="left:1420px;top:840px;width:1px;height:45px;background:#e2e2e2"></div>
<div class="t" style="left:296px;top:853.00px;font-size:13px;font-weight:bold;color:#222;letter-spacing:-0.2px;">11.12.2021</div>
<div class="t" style="left:296px;top:872.80px;font-size:13px;font-weight:bold;color:#666;letter-spacing:-0.35px;">Sobota</div>
<div class="t" style="right:1018px;top:852.50px;font-size:13px;font-weight:bold;color:#000;">0</div>
<div class="t" style="right:504px;top:852.50px;font-size:13px;font-weight:bold;color:#000;">0</div>
<div class="a" style="left:291px;top:885px;width:1586px;height:45px;background:#eeeeee;border-bottom:1px solid #dedede"></div>
<div class="a" style="left:394px;top:885px;width:1px;height:45px;background:#e2e2e2"></div>
<div class="a" style="left:850px;top:885px;width:1px;height:45px;background:#e2e2e2"></div>
<div class="a" style="left:907px;top:885px;width:1px;height:45px;background:#e2e2e2"></div>
<div class="a" style="left:1363px;top:885px;width:1px;height:45px;background:#e2e2e2"></div>
<div class="a" style="left:1420px;top:885px;width:1px;height:45px;background:#e2e2e2"></div>
<div class="t" style="left:296px;top:898.00px;font-size:13px;font-weight:bold;color:#222;letter-spacing:-0.2px;">12.12.2021</div>
<div class="t" style="left:296px;top:917.80px;font-size:13px;font-weight:bold;color:#666;letter-spacing:-0.35px;">Neděle</div>
<div class="t" style="right:1018px;top:897.50px;font-size:13px;font-weight:bold;color:#000;">0</div>
<div class="t" style="right:504px;top:897.50px;font-size:13px;font-weight:bold;color:#000;">0</div>
<div class="a" style="left:291px;top:930px;width:1586px;height:45px;background:#ffffff;border-bottom:1px solid #dedede"></div>
<div class="a" style="left:394px;top:930px;width:1px;height:45px;background:#e2e2e2"></div>
<div class="a" style="left:850px;top:930px;width:1px;height:45px;background:#e2e2e2"></div>
<div class="a" style="left:907px;top:930px;width:1px;height:45px;background:#e2e2e2"></div>
<div class="a" style="left:1363px;top:930px;width:1px;height:45px;background:#e2e2e2"></div>
<div class="a" style="left:1420px;top:930px;width:1px;height:45px;background:#e2e2e2"></div>
<div class="t" style="left:296px;top:943.00px;font-size:13px;font-weight:bold;color:#222;letter-spacing:-0.2px;">13.12.2021</div>
<div class="t" style="left:296px;top:962.80px;font-size:13px;font-weight:bold;color:#666;letter-spacing:-0.35px;">Pondělí</div>
<svg style="left:404px;top:947.0px" width="44" height="13" viewBox="0 0 44 13"><path d="M1.6 1.4 L9.6 9.4 M9.6 1.4 L1.6 9.4" stroke="#7b7b7b" stroke-width="1.3"/><path d="M15 11.2 L15.8 8 L22.6 1.2 Q23.8 0.2 24.9 1.2 L25.2 1.5 Q26.2 2.6 25.2 3.8 L18.4 10.6 Z" fill="#858585"/><path d="M21.2 2.8 L23.6 5.2" stroke="#fff" stroke-width="0.9"/><path d="M15 11.2 L15.6 9 L17.2 10.6 Z" fill="#d0d0d0"/><path d="M30.5 0.8 H36.8 L39.8 3.8 V11 H30.5 Z" fill="none" stroke="#d9d9d9" stroke-width="1"/><path d="M32.5 4.5 H34 M32.5 7.5 H34 M35 6 H37.5" stroke="#d6d6d6" stroke-width="1"/><path d="M35.5 10.5 L41 5 L42.2 6.2 L36.7 11.7 Z" fill="#e2e2e2"/></svg>
<div class="t" style="left:460.5px;top:950.50px;font-size:13px;font-weight:normal;color:#222;letter-spacing:-0.3px;">07:00 -&nbsp; 15:30</div>
<div class="t" style="left:547px;top:950.50px;font-size:13px;font-weight:normal;color:#222;letter-spacing:-0.5px;">Operační sál 1</div>
<div class="t" style="right:1096px;top:950.50px;font-size:13px;font-weight:normal;color:#9a9a9a;">1P</div>
<div class="t" style="right:1018px;top:942.50px;font-size:13px;font-weight:bold;color:#000;">8</div>
<div class="t" style="right:504px;top:942.50px;font-size:13px;font-weight:bold;color:#000;">0</div>
<div class="a" style="left:291px;top:975px;width:1586px;height:45px;background:#ffffff;border-bottom:1px solid #dedede"></div>
<div class="a" style="left:394px;top:975px;width:1px;height:45px;background:#e2e2e2"></div>
<div class="a" style="left:850px;top:975px;width:1px;height:45px;background:#e2e2e2"></div>
<div class="a" style="left:907px;top:975px;width:1px;height:45px;background:#e2e2e2"></div>
<div class="a" style="left:1363px;top:975px;width:1px;height:45px;background:#e2e2e2"></div>
<div class="a" style="left:1420px;top:975px;width:1px;height:45px;background:#e2e2e2"></div>
<div class="t" style="left:296px;top:988.00px;font-size:13px;font-weight:bold;color:#222;letter-spacing:-0.2px;">14.12.2021</div>
<div class="t" style="left:296px;top:1007.80px;font-size:13px;font-weight:bold;color:#666;letter-spacing:-0.35px;">Úterý</div>
<svg style="left:404px;top:992.0px" width="44" height="13" viewBox="0 0 44 13"><path d="M1.6 1.4 L9.6 9.4 M9.6 1.4 L1.6 9.4" stroke="#7b7b7b" stroke-width="1.3"/><path d="M15 11.2 L15.8 8 L22.6 1.2 Q23.8 0.2 24.9 1.2 L25.2 1.5 Q26.2 2.6 25.2 3.8 L18.4 10.6 Z" fill="#858585"/><path d="M21.2 2.8 L23.6 5.2" stroke="#fff" stroke-width="0.9"/><path d="M15 11.2 L15.6 9 L17.2 10.6 Z" fill="#d0d0d0"/><path d="M30.5 0.8 H36.8 L39.8 3.8 V11 H30.5 Z" fill="none" stroke="#d9d9d9" stroke-width="1"/><path d="M32.5 4.5 H34 M32.5 7.5 H34 M35 6 H37.5" stroke="#d6d6d6" stroke-width="1"/><path d="M35.5 10.5 L41 5 L42.2 6.2 L36.7 11.7 Z" fill="#e2e2e2"/></svg>
<div class="t" style="left:460.5px;top:995.50px;font-size:13px;font-weight:normal;color:#222;letter-spacing:-0.3px;">07:00 -&nbsp; 15:30</div>
<div class="t" style="left:547px;top:995.50px;font-size:13px;font-weight:normal;color:#222;letter-spacing:-0.5px;">Operační sál 1</div>
<div class="t" style="right:1096px;top:995.50px;font-size:13px;font-weight:normal;color:#9a9a9a;">1P</div>
<div class="t" style="right:1018px;top:987.50px;font-size:13px;font-weight:bold;color:#000;">8</div>
<div class="t" style="right:504px;top:987.50px;font-size:13px;font-weight:bold;color:#000;">0</div>
<div class="a" style="left:291px;top:1020px;width:1586px;height:45px;background:#ffffff;border-bottom:1px solid #dedede"></div>
<div class="a" style="left:394px;top:1020px;width:1px;height:45px;background:#e2e2e2"></div>
<div class="a" style="left:850px;top:1020px;width:1px;height:45px;background:#e2e2e2"></div>
<div class="a" style="left:907px;top:1020px;width:1px;height:45px;background:#e2e2e2"></div>
<div class="a" style="left:1363px;top:1020px;width:1px;height:45px;background:#e2e2e2"></div>
<div class="a" style="left:1420px;top:1020px;width:1px;height:45px;background:#e2e2e2"></div>
<div class="t" style="left:296px;top:1033.00px;font-size:13px;font-weight:bold;color:#222;letter-spacing:-0.2px;">15.12.2021</div>
<div class="t" style="left:296px;top:1052.80px;font-size:13px;font-weight:bold;color:#666;letter-spacing:-0.35px;">Středa</div>
<svg style="left:404px;top:1037.0px" width="44" height="13" viewBox="0 0 44 13"><path d="M1.6 1.4 L9.6 9.4 M9.6 1.4 L1.6 9.4" stroke="#7b7b7b" stroke-width="1.3"/><path d="M15 11.2 L15.8 8 L22.6 1.2 Q23.8 0.2 24.9 1.2 L25.2 1.5 Q26.2 2.6 25.2 3.8 L18.4 10.6 Z" fill="#858585"/><path d="M21.2 2.8 L23.6 5.2" stroke="#fff" stroke-width="0.9"/><path d="M15 11.2 L15.6 9 L17.2 10.6 Z" fill="#d0d0d0"/><path d="M30.5 0.8 H36.8 L39.8 3.8 V11 H30.5 Z" fill="none" stroke="#d9d9d9" stroke-width="1"/><path d="M32.5 4.5 H34 M32.5 7.5 H34 M35 6 H37.5" stroke="#d6d6d6" stroke-width="1"/><path d="M35.5 10.5 L41 5 L42.2 6.2 L36.7 11.7 Z" fill="#e2e2e2"/></svg>
<div class="t" style="left:460.5px;top:1040.50px;font-size:13px;font-weight:normal;color:#222;letter-spacing:-0.3px;">07:00 -&nbsp; 15:30</div>
<div class="t" style="left:547px;top:1040.50px;font-size:13px;font-weight:normal;color:#222;letter-spacing:-0.5px;">Operační sál 1</div>
<div class="t" style="right:1096px;top:1040.50px;font-size:13px;font-weight:normal;color:#9a9a9a;">1P</div>
<div class="t" style="right:1018px;top:1032.50px;font-size:13px;font-weight:bold;color:#000;">8</div>
<div class="t" style="right:504px;top:1032.50px;font-size:13px;font-weight:bold;color:#000;">0</div>
<div class="a" style="left:1907px;top:187px;width:13px;height:880px;background:#f0f0f0"></div>
<div class="a" style="left:1909px;top:200px;width:9px;height:338px;background:#c1c1c1"></div>
<svg style="left:1909px;top:190px" width="9" height="6" viewBox="0 0 9 6"><path d="M0.5 5 H8.5 L4.5 1 Z" fill="#a3a3a3"/></svg>
<svg style="left:1909px;top:1058px" width="9" height="6" viewBox="0 0 9 6"><path d="M0.5 1 H8.5 L4.5 5 Z" fill="#505050"/></svg>
<div class="a" style="left:262px;top:1067px;width:1658px;height:13px;background:#f1f1f1"></div>
<svg style="left:266px;top:1070px" width="6" height="9" viewBox="0 0 6 9"><path d="M5 0.5 V8.5 L1 4.5 Z" fill="#a3a3a3"/></svg>
<svg style="left:1900px;top:1070px" width="6" height="9" viewBox="0 0 6 9"><path d="M1 0.5 V8.5 L5 4.5 Z" fill="#a3a3a3"/></svg>
<div class="a" style="left:1907px;top:1067px;width:13px;height:13px;background:#dcdcdc"></div>
<div class="a" style="left:1859px;top:184px;width:28px;height:19px;background:#fff;border:1px solid #767676"></div>
<div class="t" style="left:1865px;top:193.88px;font-size:9px;font-weight:normal;color:#555;">Tisk</div>
<div class="a" style="left:1310px;top:289px;width:412px;height:136px;border:2px solid #000;background:rgba(255,194,0,0.79)"></div>
<div class="t" style="left:1337px;top:357.41px;font-size:32px;font-weight:normal;color:#000;letter-spacing:0.4px;">Tlačítko pro export a tisk</div>
<svg style="left:0;top:0" width="1920" height="1080" viewBox="0 0 1920 1080"><path d="M1721 290 L1839 170" stroke="#000" stroke-width="2.2"/></svg>
</body></html>
